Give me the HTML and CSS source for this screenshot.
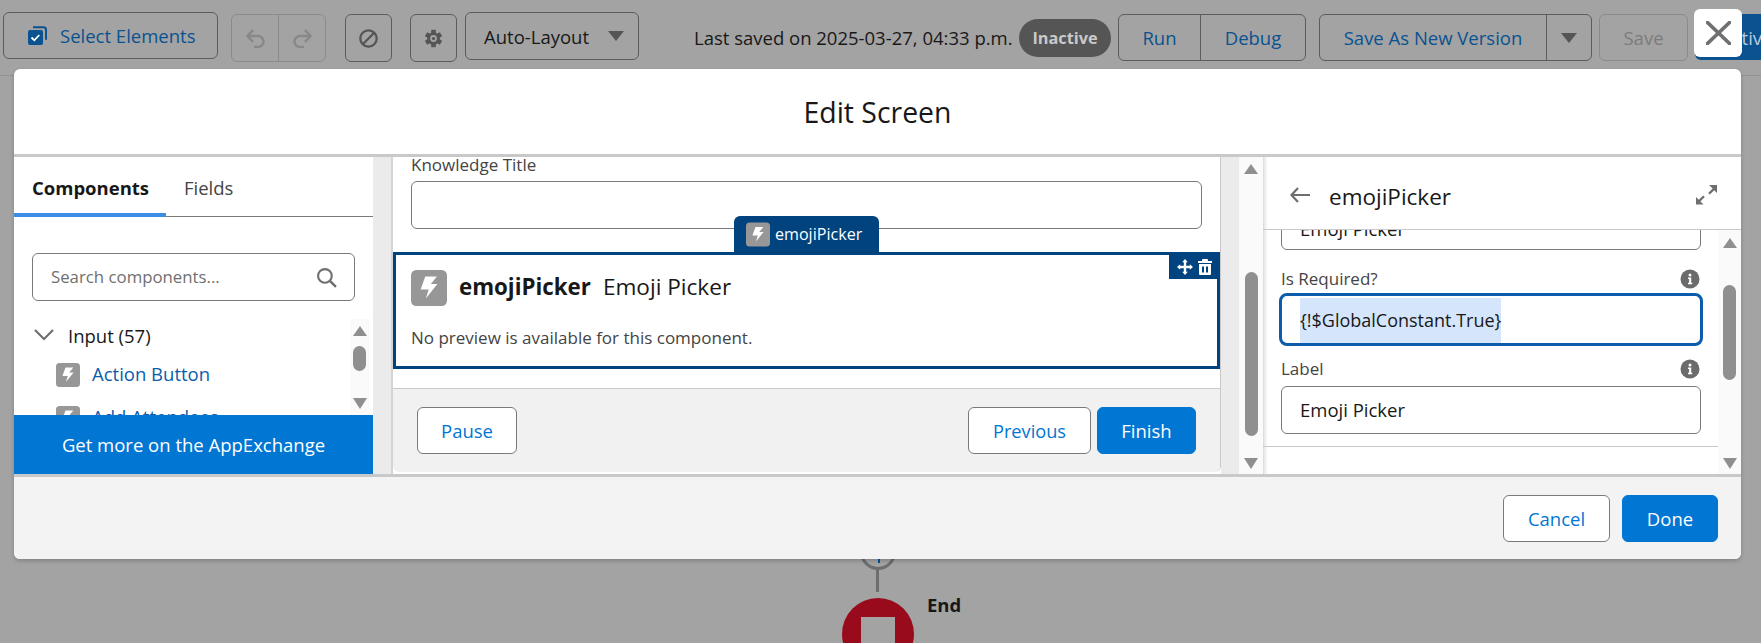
FILE: index.html
```html
<!DOCTYPE html>
<html lang="en">
<head>
<meta charset="utf-8">
<title>Edit Screen</title>
<link rel="stylesheet" href="styles.css">
</head>
<body>
<svg class="defs" width="0" height="0" aria-hidden="true">
  <symbol id="bolt" viewBox="0 0 24 24">
    <rect width="24" height="24" rx="3.500" fill="#979797"/>
    <path d="M9.500 4.400H17.300L13.200 9.400H17.600L9.900 19 11.800 13H6.400Z" fill="#fff"/>
  </symbol>
  <symbol id="info" viewBox="0 0 20 20">
    <circle cx="10" cy="10" r="9.500" fill="#6b6b6b"/>
    <circle cx="10" cy="5.900" r="1.500" fill="#fff"/>
    <path d="M8 8.600h3.200v5.200H12.300v1.400H8v-1.400h1.100V10H8z" fill="#fff"/>
  </symbol>
</svg>

<header class="toolbar">
  <button class="tb tb-select">
    <svg class="ic" viewBox="0 0 19 19"><path d="M5 1.200h10.500a2.500 2.500 0 0 1 2.500 2.500v10" fill="none" stroke="#0a5290" stroke-width="2"/><rect y="4" width="15" height="15" rx="2" fill="#0a5290"/><path d="m3.500 11.500 2.800 2.800 5-5.300" fill="none" stroke="#fff" stroke-width="1.800"/></svg>
    <span>Select Elements</span>
  </button>
  <div class="tb-group tb-undo">
    <span class="seg seg-icon"><svg class="ic" viewBox="0 0 19 19"><path d="M7 1 1.500 7 7 13M2 7h10a5.500 5.500 0 0 1 0 11H8" fill="none" stroke="#888" stroke-width="2.400"/></svg></span>
    <span class="seg seg-icon"><svg class="ic" viewBox="0 0 19 19"><path d="m12 1 5.500 6-5.500 6M17 7H7a5.500 5.500 0 0 0 0 11h4" fill="none" stroke="#888" stroke-width="2.400"/></svg></span>
  </div>
  <button class="tb tb-square tb-stop"><svg class="ic" viewBox="0 0 19 19"><circle cx="9.500" cy="9.500" r="8.200" fill="none" stroke="#555" stroke-width="2.300"/><path d="M4 15 15 4" stroke="#555" stroke-width="2.300"/></svg></button>
  <button class="tb tb-square tb-gear"><svg class="ic" viewBox="0 0 19 19"><g stroke="#555" stroke-width="4.600"><path d="M9.500 .8v17.400"/><path d="M2 5.150 17 13.850"/><path d="M2 13.850 17 5.150"/></g><circle cx="9.500" cy="9.500" r="6.300" fill="#555"/><circle cx="9.500" cy="9.500" r="3.400" fill="#a3a3a3"/><circle cx="9.500" cy="9.500" r="1.600" fill="#555"/></svg></button>
  <button class="tb tb-layout"><span>Auto-Layout</span><i class="tri"></i></button>
  <span class="saved">Last saved on 2025-03-27, 04:33 p.m.</span>
  <span class="pill">Inactive</span>
  <div class="tb-group tb-run">
    <span class="seg seg-run">Run</span>
    <span class="seg seg-debug">Debug</span>
  </div>
  <div class="tb-group tb-version">
    <span class="seg seg-version">Save As New Version</span>
    <span class="seg seg-caret"><i class="tri"></i></span>
  </div>
  <button class="tb tb-save">Save</button>
  <button class="tb tb-activate">Activate</button>
</header>

<div class="node ring"><i></i></div>
<div class="node stem"></div>
<div class="node end"><i></i></div>
<div class="node end-label">End</div>

<button class="close" aria-label="Close"><svg viewBox="0 0 25 24"><path d="M1.500 1.500l22 21M23.500 1.500l-22 21" fill="none" stroke="#707070" stroke-width="3.800" stroke-linecap="round"/></svg></button>

<section class="modal">
  <h1 class="modal-head">Edit Screen</h1>
  <div class="modal-body">
    <aside class="palette">
      <nav class="tabs"><span class="tab tab-on">Components</span><span class="tab">Fields</span></nav>
      <div class="search">
        <span>Search components...</span>
        <svg class="ic-search" viewBox="0 0 20 20"><circle cx="8.500" cy="8.500" r="6.500" fill="none" stroke="#6f6f6f" stroke-width="2"/><path d="m13 13 6 6" stroke="#6f6f6f" stroke-width="2.400"/></svg>
      </div>
      <div class="tree-wrap">
        <div class="tree">
          <div class="tree-head">
            <svg class="ic-chev" viewBox="0 0 20 12"><path d="m1 1 9 9 9-9" fill="none" stroke="#6f6f6f" stroke-width="2.200"/></svg>
            <span>Input (57)</span>
          </div>
          <div class="tree-item"><svg class="ic-bolt"><use href="#bolt"/></svg><span>Action Button</span></div>
          <div class="tree-item"><svg class="ic-bolt"><use href="#bolt"/></svg><span>Add Attendees</span></div>
        </div>
        <div class="sbar sbar-left"><i class="up"></i><b></b><i class="down"></i></div>
      </div>
      <div class="appex">Get more on the AppExchange</div>
    </aside>

    <div class="gutter"></div>

    <main class="canvas">
      <div class="canvas-scroll">
        <label class="fld-label">Knowledge Title</label>
        <div class="input input-title"></div>
        <div class="selected">
          <div class="sel-tab"><svg class="ic-bolt-sm"><use href="#bolt"/></svg><span>emojiPicker</span></div>
          <div class="sel-tools">
            <svg class="ic-move" viewBox="0 0 16 16"><path fill="#fff" d="M8 0l2.800 3.200H9.200v3.600h3.600V5.200L16 8l-3.200 2.800V9.200H9.200v3.600h1.600L8 16l-2.800-3.200h1.600V9.200H3.200v1.600L0 8l3.200-2.800v1.600h3.600V3.200H5.200z"/></svg>
            <svg class="ic-trash" viewBox="0 0 14 16"><path fill="#fff" fill-rule="evenodd" d="M5 0h4a1 1 0 0 1 1 1v1h4v2H0V2h4V1a1 1 0 0 1 1-1zM1 5h12v10a1 1 0 0 1-1 1H2a1 1 0 0 1-1-1zm3 2.500v6h2v-6zm4 0v6h2v-6z"/></svg>
          </div>
          <div class="sel-title"><svg class="ic-bolt-lg"><use href="#bolt"/></svg><strong>emojiPicker</strong><span>Emoji Picker</span></div>
          <p class="sel-note">No preview is available for this component.</p>
        </div>
      </div>
      <div class="canvas-foot">
        <button class="btn">Pause</button>
        <span class="foot-space"></span>
        <button class="btn btn-prev">Previous</button>
        <button class="btn btn-brand btn-finish">Finish</button>
      </div>
    </main>

    <div class="gutter2"></div>
    <div class="sbar sbar-mid"><i class="up"></i><b></b><i class="down"></i></div>

    <aside class="props">
      <div class="props-head">
        <svg class="ic-back" viewBox="0 0 20 16"><path d="M8 1 1.500 8 8 15M2 8h18" fill="none" stroke="#6f6f6f" stroke-width="2.200"/></svg>
        <span class="props-title">emojiPicker</span>
        <svg class="ic-expand" viewBox="0 0 21 20"><path fill="#6f6f6f" d="M13 0h8v8l-2.800-2.800-4.400 4.400-1.600-1.600 4.400-4.400zM0 12l2.800 2.800 4.400-4.400 1.600 1.600-4.400 4.400L7.600 19.400H0z"/></svg>
      </div>
      <div class="props-main">
        <div class="props-scroll">
          <div class="input input-clip">Emoji Picker</div>
          <div class="label-row"><span>Is Required?</span><svg class="ic-info"><use href="#info"/></svg></div>
          <div class="input input-focus"><span>{!$GlobalConstant.True}</span></div>
          <div class="label-row label-row2"><span>Label</span><svg class="ic-info"><use href="#info"/></svg></div>
          <div class="input input-label">Emoji Picker</div>
          <hr class="props-rule">
          <div class="section-next">
            <svg class="ic-chev-up" viewBox="0 0 15 9"><path d="m1 8 6.500-7L14 8" fill="none" stroke="#444" stroke-width="2"/></svg>
            <span>Set Component Visibility</span>
          </div>
        </div>
        <div class="sbar sbar-right"><i class="up"></i><b></b><i class="down"></i></div>
      </div>
    </aside>
  </div>
  <footer class="modal-foot">
    <button class="btn btn-cancel">Cancel</button>
    <button class="btn btn-brand btn-done">Done</button>
  </footer>
</section>
</body>
</html>
```
FILE: styles.css
```css
* { box-sizing: border-box; }
html, body { margin: 0; height: 643px; overflow: hidden; }
body {
  position: relative;
  background: #a3a3a3;
  font-family: "Open Sans", "Noto Sans", "Liberation Sans", sans-serif;
  font-size: 18.500px;
  color: #181818;
}
button { font: inherit; margin: 0; padding: 0; background: none; }
.defs { position: absolute; }

/* toolbar */
.toolbar {
  display: flex;
  align-items: flex-start;
  height: 76px;
  border-bottom: 1px solid #929292;
  white-space: nowrap;
}
.toolbar > * { flex: none; }
.tb, .tb-group {
  display: flex;
  align-items: center;
  border: 1px solid #5c5c5c;
  border-radius: 6px;
  color: #0a5290;
}
.tb-select { margin: 12px 0 0 3px; width: 215px; height: 47px; padding-left: 24px; gap: 13px; }
.ic { width: 19px; height: 19px; display: block; flex: none; }
.tb-undo { margin: 14px 0 0 13px; width: 95px; height: 48px; border-color: #8b8b8b; }
.seg { display: flex; align-items: center; height: 100%; }
.seg-icon { flex: 1; justify-content: center; }
.seg-icon + .seg-icon { border-left: 1px solid #8b8b8b; }
.tb-square { width: 47px; height: 48px; margin-top: 14px; justify-content: center; }
.tb-stop { margin-left: 19px; }
.tb-gear { margin-left: 18px; }
.tb-layout { margin: 12px 0 0 8px; width: 174px; height: 48px; padding-left: 18px; color: #181818; }
.tri {
  display: block;
  width: 0; height: 0;
  border-left: 8px solid transparent;
  border-right: 8px solid transparent;
  border-top: 10px solid #555;
}
.tb-layout .tri { margin-left: 19px; }
.saved { margin: 26px 0 0 55px; width: 325px; line-height: 24px; }
.pill {
  margin: 19px 0 0 0;
  width: 92px; height: 38px;
  border-radius: 19px;
  background: #555;
  color: #c9c9c9;
  font-weight: 700;
  font-size: 16.300px;
  line-height: 38px;
  text-align: center;
}
.tb-run { margin: 14px 0 0 7px; width: 188px; height: 47px; }
.seg-run { width: 82px; justify-content: center; border-right: 1px solid #5c5c5c; }
.seg-debug { flex: 1; justify-content: center; }
.tb-version { margin: 14px 0 0 13px; width: 273px; height: 47px; }
.seg-version { width: 227px; justify-content: center; border-right: 1px solid #5c5c5c; }
.seg-caret { flex: 1; justify-content: center; }
.tb-save {
  margin: 14px 0 0 7px;
  width: 89px; height: 47px;
  justify-content: center;
  border-color: #8b8b8b;
  color: #7c7c7c;
}
.tb-activate {
  margin: 14px 0 0 7px;
  width: 80px; height: 46px;
  padding-left: 26px;
  border: 0;
  border-radius: 6px 0 0 6px;
  background: #0a5290;
  color: #b8ccdd;
}

/* flow canvas behind the modal */
.node { position: absolute; }
.ring { left: 860px; top: 534px; width: 36px; height: 36px; border: 3px solid #6e6e6e; border-radius: 50%; }
.ring i { position: absolute; left: 15px; top: 18px; width: 2px; height: 8px; background: #0a5290; }
.stem { left: 876px; top: 570px; width: 3px; height: 22px; background: #6e6e6e; }
.end { left: 842px; top: 598px; width: 72px; height: 72px; border-radius: 50%; background: #970b1c; }
.end i { position: absolute; left: 19px; top: 19px; width: 34px; height: 34px; background: #a3a3a3; }
.end-label { left: 927px; top: 593px; font-weight: 700; line-height: 24px; }

/* close */
.close {
  position: absolute;
  left: 1694px; top: 9px;
  width: 48px; height: 48px;
  border: 0;
  border-radius: 6px;
  background: #fff;
  z-index: 2;
}
.close svg { display: block; width: 25px; height: 24px; margin: 0 0 0 12px; }

/* modal */
.modal {
  position: absolute;
  left: 14px; top: 69px;
  width: 1727px; height: 490px;
  display: flex;
  flex-direction: column;
  border-radius: 6px;
  background: #fff;
  box-shadow: 0 2px 4px rgba(0,0,0,.2);
  z-index: 1;
}
.modal-head {
  flex: none;
  height: 88px;
  margin: 0;
  border-bottom: 3px solid #c9c9c9;
  font-weight: 400;
  font-size: 28.400px;
  line-height: 87px;
  text-align: center;
}
.modal-body { flex: none; height: 317px; display: flex; overflow: hidden; }
.modal-foot {
  flex: 1;
  display: flex;
  justify-content: flex-end;
  gap: 12px;
  padding: 18px 23px 0 0;
  border-top: 3px solid #c9c9c9;
  border-radius: 0 0 6px 6px;
  background: #f3f3f3;
}

.btn {
  height: 47px;
  border: 1px solid #7a7a7a;
  border-radius: 6px;
  background: #fff;
  color: #0176d3;
}
.btn-brand { border-color: #0176d3; background: #0176d3; color: #fff; }
.btn-cancel { width: 107px; }
.btn-done { width: 96px; }

/* left palette */
.palette { flex: none; width: 359px; display: flex; flex-direction: column; }
.tabs { flex: none; display: flex; height: 60px; border-bottom: 1px solid #7a7a7a; }
.tab { padding: 18px 0 0 18px; line-height: 26px; color: #444; }
.tab-on { width: 152px; height: 60px; border-bottom: 4px solid #3b8ee8; font-weight: 700; color: #181818; }
.search {
  flex: none;
  display: flex;
  align-items: center;
  justify-content: space-between;
  width: 323px; height: 48px;
  margin: 36px 0 0 18px;
  padding: 0 17px 0 18px;
  border: 1px solid #7a7a7a;
  border-radius: 6px;
  font-size: 16.800px;
  color: #6f6f6f;
}
.search span { margin-top: -2px; }
.ic-search { width: 21px; height: 21px; }
.tree-wrap { flex: 1; min-height: 0; display: flex; margin-top: 18px; overflow: hidden; }
.tree { flex: 1; min-width: 0; padding-left: 20px; }
.tree-head { display: flex; align-items: center; height: 32px; }
.ic-chev { width: 20px; height: 12px; margin-right: 14px; }
.tree-item { display: flex; align-items: center; gap: 12px; height: 24px; margin: 12px 0 19px 22px; color: #0b5cab; }
.tree-item span { margin-top: -4px; }
.ic-bolt { width: 24px; height: 24px; flex: none; }
.appex {
  flex: none;
  height: 59px;
  background: #0176d3;
  color: #fff;
  line-height: 60px;
  text-align: center;
}

/* scrollbars */
.sbar { flex: none; display: flex; flex-direction: column; align-items: center; background: #fafafa; }
.sbar .up, .sbar .down {
  display: block;
  width: 0; height: 0;
  border-left: 7px solid transparent;
  border-right: 7px solid transparent;
}
.sbar .up { border-bottom: 10px solid #8f8f8f; }
.sbar .down { border-top: 11px solid #8f8f8f; margin-top: auto; }
.sbar b { display: block; width: 13px; border-radius: 7px; background: #8f8f8f; }
.sbar-left { width: 19px; margin-right: 4px; padding: 7px 0 6px; }
.sbar-left b { height: 25px; margin-top: 10px; }
.sbar-mid { width: 24px; padding: 7px 0 5px; }
.sbar-mid b { height: 164px; margin-top: 98px; }
.sbar-right { width: 23px; padding: 8px 0 5px; }
.sbar-right b { height: 95px; margin-top: 37px; }

.gutter { flex: none; width: 20px; background: #ebebeb; border-right: 2px solid #d4d4d4; }
.gutter2 { flex: none; width: 18px; background: #ebebeb; }

/* centre canvas */
.canvas {
  flex: none;
  width: 828px;
  height: 315px;
  display: flex;
  flex-direction: column;
  border-right: 1px solid #c9c9c9;
  border-radius: 0 0 6px 6px;
}
.canvas-scroll { flex: none; height: 232px; border-bottom: 1px solid #c9c9c9; }
.fld-label { display: block; margin-left: 18px; height: 24px; font-size: 17px; line-height: 15px; color: #444; }
.input {
  border: 1px solid #7a7a7a;
  border-radius: 6px;
  background: #fff;
  line-height: 46px;
}
.input-title { height: 48px; width: 791px; margin-left: 18px; }
.selected {
  position: relative;
  height: 117px;
  width: 827px;
  margin-top: 23px;
  padding: 15px 15px 0;
  border: 3px solid #00437f;
}
.sel-tab {
  position: absolute;
  left: 338px; top: -39px;
  display: flex;
  align-items: center;
  gap: 5px;
  width: 145px; height: 36px;
  padding: 0 0 0 12px;
  border-radius: 6px 6px 0 0;
  background: #00437f;
  color: #fff;
  font-size: 16.100px;
}
.ic-bolt-sm { width: 24px; height: 25px; flex: none; }
.sel-tools {
  position: absolute;
  right: 0; top: 0;
  display: flex;
  align-items: center;
  justify-content: center;
  gap: 5px;
  width: 48px; height: 24px;
  padding-left: 2px;
  background: #00437f;
}
.ic-move { width: 16px; height: 16px; }
.ic-trash { width: 14px; height: 16px; }
.sel-title { display: flex; align-items: center; font-size: 22.600px; }
.sel-title strong, .sel-title span { margin-top: -3px; }
.ic-bolt-lg { width: 36px; height: 36px; flex: none; margin-right: 12px; }
.sel-title strong { margin-right: 12px; font-size: 22.300px; }
.sel-note { margin: 20px 0 0; font-size: 17px; line-height: 24px; color: #444; }
.canvas-foot {
  flex: 1;
  display: flex;
  padding: 18px 24px 0;
  background: #f1f1f1;
  border-radius: 0 0 6px 6px;
  gap: 6px;
}
.foot-space { flex: 1; }
.canvas-foot .btn { width: 100px; }
.canvas-foot .btn-prev { width: 123px; font-size: 18.200px; }
.canvas-foot .btn-finish { width: 99px; }

/* right properties */
.props { flex: 1; min-width: 0; display: flex; flex-direction: column; box-shadow: inset 5px 0 4px -4px rgba(0,0,0,.22); }
.props-head {
  flex: none;
  display: flex;
  align-items: center;
  height: 73px;
  padding: 6px 24px 0 27px;
  border-bottom: 1px solid #c9c9c9;
}
.ic-back { width: 20px; height: 16px; margin: -2px 19px 0 0; }
.props-title { flex: 1; font-size: 22.500px; }
.ic-expand { width: 21px; height: 20px; margin-top: -2px; }
.props-main { flex: 1; min-height: 0; display: flex; }
.props-scroll { flex: 1; min-width: 0; overflow: hidden; padding-left: 18px; }
.input-clip { width: 420px; height: 48px; margin-top: -28px; padding-left: 18px; padding-top: 3px; }
.label-row { display: flex; align-items: center; justify-content: space-between; width: 420px; height: 20px; margin-top: 19px; font-size: 17px; color: #444; }
.label-row span { margin-top: -2px; }
.label-row2 { margin-top: 13px; }
.ic-info { width: 20px; height: 20px; margin-right: 1px; }
.input-focus {
  width: 424px; height: 53px;
  margin: 4px 0 0 -2px;
  padding: 2px 0 0 18px;
  border: 3px solid #0b5cab;
  border-radius: 8px;
  font-size: 18px;
  line-height: 45px;
}
.input-focus span { display: inline-block; height: 45px; background: #d5e5fb; }
.input-label { width: 420px; height: 48px; margin-top: 7px; padding-left: 18px; }
.props-rule { width: 456px; margin: 12px 0 0 -18px; border: 0; border-top: 1px solid #c9c9c9; }
.section-next { display: flex; align-items: flex-start; gap: 24px; margin-top: 20px; font-size: 22px; line-height: 30px; }
.ic-chev-up { flex: none; width: 15px; height: 9px; margin-top: 7px; }
```
